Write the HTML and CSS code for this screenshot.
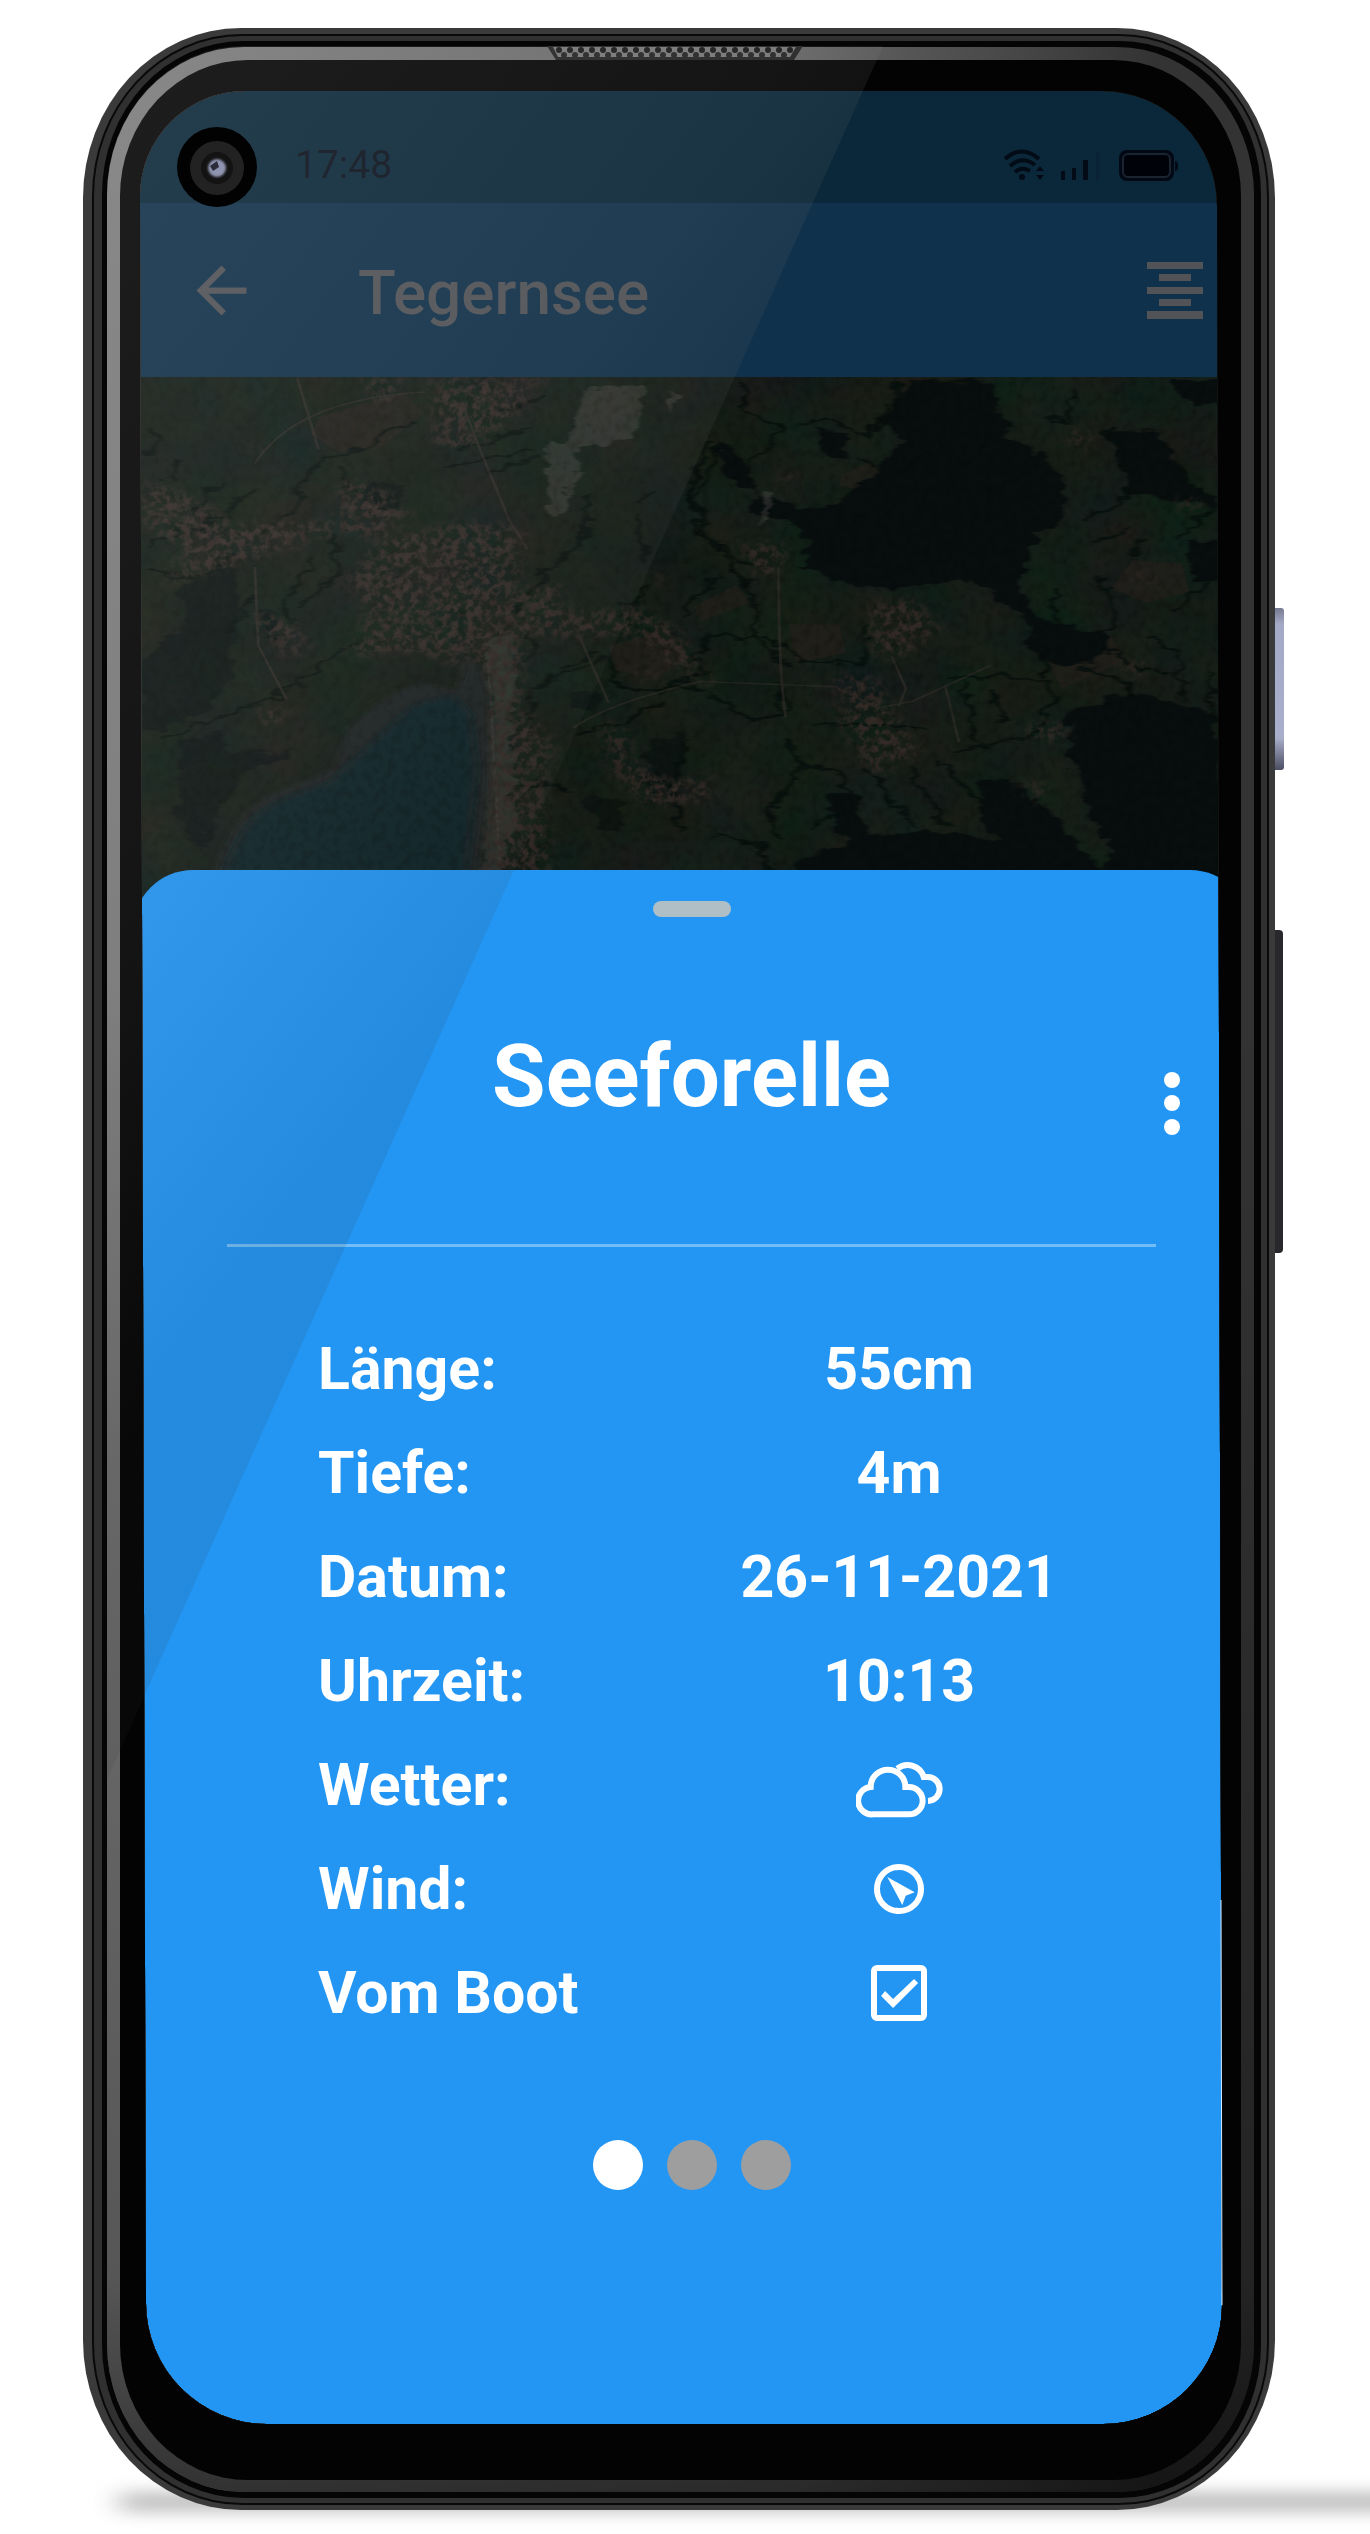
FILE: index.html
```html
<!DOCTYPE html>
<html lang="de">
<head>
<meta charset="utf-8">
<meta name="viewport" content="width=device-width, initial-scale=1">
<title>Tegernsee – Seeforelle</title>
<link rel="stylesheet" href="styles.css">
</head>
<body>
<main class="phone">
  <div class="screen">
    <div class="status">
      <span>17:48</span>
      <svg class="status-icons" viewBox="0 0 176 32" aria-hidden="true">
        <g fill="none" stroke="#030b16" stroke-width="4">
          <path d="M3 10Q20-5 37 10M8 17Q20 6 33 16M13 23Q20 17 28 22"/>
        </g>
        <circle cx="20" cy="28" r="3" fill="#030b16"/>
        <path d="M34 22l4-5 4 5zM34 26l4 5 4-5z" fill="#030b16"/>
        <path d="M59 22h4v9h-4zM70 19h4v12h-4zM81 11h5v20h-5z" fill="#030b16"/>
        <path d="M94 3h3v28h-3z" fill="#0a2137"/>
        <rect x="118" y="2" width="53" height="29" rx="7" fill="#020814" stroke="#020814" stroke-width="2"/>
        <rect x="121" y="5" width="47" height="23" rx="5" fill="#000209" stroke="#1a2431" stroke-width="2"/>
        <path d="M173 12q3 0 3 5t-3 5z" fill="#020814"/>
      </svg>
    </div>
    <header class="appbar">
      <button class="icon-button" type="button" aria-label="Zurück">
        <svg width="75" height="75" viewBox="0 0 24 24"><path fill="currentColor" d="M20 11H7.83l5.59-5.59L12 4l-8 8 8 8 1.41-1.41L7.83 13H20z"/></svg>
      </button>
      <h1 class="lake">Tegernsee</h1>
      <button class="icon-button" type="button" aria-label="Liste">
        <svg width="56" height="57" viewBox="0 0 56 57"><path fill="currentColor" d="M0 0h56v7H0zM12 12h32v7H12zM0 25h56v7H0zM12 37h32v7H12zM0 49h56v8H0z"/></svg>
      </button>
    </header>
    <svg class="map" viewBox="18 48 1578 1492" preserveAspectRatio="none" aria-hidden="true">
      <defs>
        <filter id="rough" x="-5%" y="-5%" width="110%" height="110%" color-interpolation-filters="sRGB">
          <feTurbulence type="fractalNoise" baseFrequency=".03" numOctaves="3" seed="4" result="n"/>
          <feDisplacementMap in="SourceGraphic" in2="n" scale="40" xChannelSelector="R" yChannelSelector="G" result="d"/>
          <feGaussianBlur in="d" stdDeviation="2"/>
        </filter>
        <filter id="houses" x="-10%" y="-10%" width="120%" height="120%" color-interpolation-filters="sRGB">
          <feGaussianBlur in="SourceGraphic" stdDeviation="12" result="b"/>
          <feTurbulence type="fractalNoise" baseFrequency=".09 .05" numOctaves="4" seed="9"/>
          <feColorMatrix values="0 0 0 0 .2  0 0 0 0 .165  0 0 0 0 .15  4 0 0 0 -1.6"/>
          <feComposite in2="b" operator="in"/>
        </filter>
        <filter id="fields" x="0" y="0" width="100%" height="100%" color-interpolation-filters="sRGB">
          <feTurbulence type="fractalNoise" baseFrequency=".011 .006" numOctaves="3" seed="21"/>
          <feColorMatrix values=".08 0 0 0 .04  0 .04 0 0 .095  0 0 .04 0 .07  0 0 0 0 1"/>
        </filter>
        <filter id="grain" x="0" y="0" width="100%" height="100%" color-interpolation-filters="sRGB">
          <feTurbulence type="fractalNoise" baseFrequency=".09 .04" numOctaves="2" seed="2"/>
          <feColorMatrix values="0 0 0 0 0  0 0 0 0 0  0 0 0 0 0  2 0 0 0 -.9"/>
        </filter>
        <filter id="soft"><feGaussianBlur stdDeviation="6"/></filter>
      </defs>
      <rect x="18" y="48" width="1578" height="1492" filter="url(#fields)"/>
      <g fill="#231f1b" opacity=".7">
        <path d="M280 160l120-70 30 60-60 90-60 20-40-50zM1020 320l40-35 45 40-30 45-60-15zM810 690l60-60 20 50-70 50zM690 800l60-30 50 60-40 60-60-20zM1310 840l90-70 20 70-90 80zM1430 560l70 10 10 80-60 30-50-40zM945 740l70 0 10 80-70 30z"/>
      </g>
      <g fill="#080e0e" filter="url(#rough)">
        <path d="M1120 60h110l20 150 70 70 20 140-40 60-30 150 10 80 120 70-30 70-70 0-30-130-60-100-160 20-80-50-10-120-70-40 10-50 90 40 60-70 60-120-40-60z"/>
        <path d="M1480 50h110v70h-90zM1400 200l70 0 40 130 40 80-130-40zM1510 510h60v110h-50zM1340 990l80-60 120 60 60 550h-240l40-150-60-260zM1050 1330l80-10 200 30 60 70v120H940l20-140zM1210 1180l50-10 70 120 30 140h-110zM995 1210l40 10 20 130-40-20zM985 190l40 20 0 80-30-20zM840 220l50 80 10 70-40-40z"/>
        <path d="M75 640l80-60 15 80-15 260-40 60-60 60H30V850l70-130zM80 1070l60-30 20 60 100-10-80 60-40 120-20 100-40-70zM340 350l60 0-10 70-40 10zM655 1220l50 10 0 90-30-20zM750 1070l40-20 10 70-30 80-30-20zM640 930l40 0-10 50-30-10zM190 690l40 40-20 50z" opacity=".55"/>
      </g>
      <g fill="none" stroke="#07100d" stroke-width="7" filter="url(#rough)" opacity=".85">
        <path d="M420 185l-40 10-30 50-50 30-40 60-10 70-30 60-20 30M45 190l5 50-15 30M90 280l-20 60M190 360l-90 130M270 560l-40 130 30 60M300 490l10 120-60 80M460 300l120-50M520 320l70-50M530 220l50-40M600 100l-60 50M830 230l-25 130 10 120 50 90 35 120-5 80 50 90M850 230l-40 170 20 100 60 80M880 60l0 70 60 60-40 70-20 70M960 180l50-20 50 60 20-100M1100 60l0 90-40 60M1040 280l60 40 50-70M660 380l0 120-60 90-40 120M760 370l-30 30M730 430l10 140M580 760l0 90M830 770l90 10 40 60 90 15 5-120M830 770l-15 110M690 830l-100 80-15 100M690 830l10 90 120 0M700 720l50-90M790 720l40-80 10-30M930 900l10 90-40 20-60-70M770 960l-120 90M800 1060l-20 130 10 120M940 1060l30 80 50 10 10 100-60 60M970 1020l90 0 80 10M1060 1150l60 160M1110 1130l60 180M1160 1120l60 130M1170 1090l60-5 70-50 20-130-70-20-80 10M1300 780l10 110M1360 860l60 40 20 120M1380 790l50 70 60 20M1390 600l20 130-30 40M1490 700l60-90M1380 520l50-60M1440 500l-10 60M1490 500l60-90M1360 450l60-60 0-120-30-90M1480 280l50 100 40 10M1320 640l0 90M1190 900l20 170M1230 920l20 100M960 1130l-40 140 10 80M560 1180l70 20M840 1330l60 30 20 80M60 1060l150-110 60-70 60-90M30 590l80 20 60-60"/>
        <path d="M470 260l100-60M40 520l40-40M100 420l50-80M150 760l40-100M310 300l20 70M1310 160l30 10 10-90M760 940l70-70M620 860l60-40M1460 770l40 80 0 110M1540 880v160"/>
      </g>
      <g fill="none" stroke="#39322e" stroke-width="4" opacity=".5">
        <path d="M190 290q60-180 240-200M485 130l25 130 40 190 25 80M190 580l5 220 40 150M640 1030q50-70 180-130l190 15 60 60 50-20 110-100M940 1000q-10-130-10-420M1090 830l20 90-10 50M1165 910l20 160M650 780l40 180M250 50l30 200M520 850l20 690"/>
      </g>
      <path d="M660 80l80-10 0 70-20 80-70 30-40 90 30-160zM600 240l50 0-20 190-20 0zM775 80l20 20-15 50zM905 360l12 10-6 100-8-10zM525 780l30 0 0 500-25 240-20-30z" fill="#5b5954" opacity=".34" filter="url(#rough)"/>
      <g fill="#fff" filter="url(#houses)">
        <path d="M440 50h160l-40 100-70 110-50-30zM340 50h60l-30 100zM30 340l60 30 70 90 110-10 60 20-80 50-100 60-90 50 30-90-60-90zM310 330l60 30 40 80-50 60-50-20zM370 500l120-50 80 20-10 180 60-30 20 140-70 10-20 90 20 80-50-60-100-60-100 10 30-120-30-100zM560 650l80 60 90-20 60 70 40 140-60-50-40-80-130 10zM180 700l60 30 30 80-40 20zM510 780l60 20 0 180 50 100-20 70 10 380h-90l-20-300zM680 1000l40 40 0 80 60 60 50-20 10 70-100 20-50-110zM870 520l70-10-10 90-30 10zM1060 680l60-10 40 80-60 90-40-20zM1010 880l60 10 20 90 40 120-70 70-40-160zM1430 580l30 20-20 50zM1340 190l30 0 0 60-30-10zM1410 850l50-10-20 60zM1290 1010l50 10-10 50-50-10zM1270 1170l40 20-20 60zM190 970l50 10-30 60zM720 860l40 10-10 40zM800 870l40 20-20 30zM1490 390l40 0-20 50zM920 310l40 10-20 30zM750 590l20 20-10 30zM185 230l20 10-10 30z"/>
      </g>
      <path d="M390 925q50-35 85 5l15-100q25 20 30 120l2 240-20 360H115q20-180 60-280 30-60 100-100 40-35 45-140z" fill="#1d2421" filter="url(#soft)"/>
      <path d="M415 965l55-25 25 50 8 150-20 400H130q20-170 60-260 25-50 105-95l50-95z" fill="#0e2225" filter="url(#soft)"/>
      <rect x="18" y="48" width="1578" height="1492" filter="url(#grain)" opacity=".25"/>
    </svg>
    <section class="sheet" aria-labelledby="fish">
      <div class="handle"></div>
      <header class="sheet-head">
        <h2 id="fish">Seeforelle</h2>
        <button class="icon-button more" type="button" aria-label="Mehr">
          <svg width="16" height="63" viewBox="0 0 16 63"><g fill="currentColor"><circle cx="8" cy="8" r="8"/><circle cx="8" cy="31" r="8"/><circle cx="8" cy="55" r="8"/></g></svg>
        </button>
      </header>
      <table class="facts">
        <tr><th scope="row">Länge:</th><td>55cm</td></tr>
        <tr><th scope="row">Tiefe:</th><td>4m</td></tr>
        <tr><th scope="row">Datum:</th><td>26-11-2021</td></tr>
        <tr><th scope="row">Uhrzeit:</th><td>10:13</td></tr>
        <tr><th scope="row">Wetter:</th><td>
          <svg class="cloud" width="87" height="66" viewBox="168 98 261 198" role="img" aria-label="Bewölkt"><g fill="none" stroke="currentColor" stroke-width="18"><path d="M219 285H327A41 41 0 0 0 327 203H316A52 52 0 0 0 212 203A41 41 0 0 0 219 285z"/><path d="M292 148A50 50 0 0 1 371 173H382A36 36 0 0 1 384 245"/></g></svg>
        </td></tr>
        <tr><th scope="row">Wind:</th><td>
          <svg width="50" height="50" viewBox="224 432 150 150" role="img" aria-label="Nordwest"><circle cx="299" cy="507" r="66" fill="none" stroke="currentColor" stroke-width="18"/><path d="M264 471L346 517 319 527 309 555z" fill="currentColor"/></svg>
        </td></tr>
        <tr><th scope="row"><label for="boat">Vom Boot</label></th><td><input class="check" id="boat" type="checkbox" checked></td></tr>
      </table>
      <nav class="pages" aria-label="Seiten">
        <button class="page current" type="button" aria-label="Seite 1"></button>
        <button class="page" type="button" aria-label="Seite 2"></button>
        <button class="page" type="button" aria-label="Seite 3"></button>
      </nav>
    </section>
  </div>
  <svg class="frame" viewBox="0 0 1370 2534" preserveAspectRatio="none" aria-hidden="true">
    <defs>
      <clipPath id="hole"><path clip-rule="evenodd" d="M0 0H1370V2534H0zM140 196A105 105 0 0 1 245 91H1102A115 115 0 0 1 1217 206L1222 2305A119 119 0 0 1 1103 2424H267A121 121 0 0 1 146 2303z"/></clipPath>
      <clipPath id="body"><rect x="107" y="46" width="1147" height="2447" rx="137" ry="148"/></clipPath>
      <linearGradient id="rim" x1="83" x2="1275" y1="0" y2="0" gradientUnits="userSpaceOnUse"><stop stop-color="#7c7c7c"/><stop offset=".6" stop-color="#656565"/><stop offset=".9" stop-color="#333"/></linearGradient>
      <linearGradient id="dim" x1="0" x2="0" y1="1000" y2="2500" gradientUnits="userSpaceOnUse"><stop stop-color="#000" stop-opacity="0"/><stop offset=".85" stop-color="#000" stop-opacity=".3"/><stop offset="1" stop-color="#000" stop-opacity=".6"/></linearGradient>
      <linearGradient id="shine" x1="142" y1="91" x2="790" y2="591" gradientUnits="userSpaceOnUse"><stop stop-color="#f0f0f0"/><stop offset=".62" stop-color="#a0a0a0"/><stop offset="1" stop-color="#323232"/></linearGradient>
      <linearGradient id="key" x1="0" y1="0" x2="0" y2="1"><stop stop-color="#777b90"/><stop offset=".1" stop-color="#a4a9c6"/><stop offset=".8" stop-color="#a9aeca"/><stop offset="1" stop-color="#4c4f63"/></linearGradient>
      <pattern id="mesh" x="556" y="46" width="11" height="12" patternUnits="userSpaceOnUse"><rect width="11" height="12" fill="#777"/><circle cx="3" cy="4" r="3" fill="#161616"/><circle cx="8" cy="9" r="3" fill="#222"/></pattern>
      <filter id="haze" x="-10%" y="-200%" width="120%" height="500%"><feGaussianBlur stdDeviation="14 8"/></filter>
      <filter id="edge" x="-20%" y="-20%" width="140%" height="140%"><feGaussianBlur stdDeviation="1"/></filter>
    </defs>
    <path d="M120 2492H1420V2512H120z" fill="#c0c0c0" filter="url(#haze)"/>
    <rect x="1268" y="608" width="16" height="162" rx="3" fill="url(#key)"/>
    <rect x="1268" y="930" width="15" height="323" rx="4" fill="#28282c"/>
    <g clip-path="url(#hole)">
      <rect x="83" y="28" width="1192" height="2482" rx="158" ry="170" fill="#3a3a3a"/>
      <rect x="92" y="34" width="1177" height="2471" rx="150" ry="162" fill="#090909"/>
      <rect x="94" y="36" width="1173" height="2467" rx="148" ry="160" fill="#303030"/>
      <rect x="102" y="41" width="1159" height="2457" rx="141" ry="153" fill="#050505"/>
      <rect x="107" y="47" width="1147" height="2445" rx="137" ry="148" fill="url(#rim)"/>
      <rect x="107" y="47" width="1147" height="2445" rx="137" ry="148" fill="url(#dim)"/>
      <rect x="120" y="60" width="1121" height="2420" rx="128" ry="136" fill="#030303"/>
      <path d="M547 46H803L794 60H556z" fill="#222"/>
      <path d="M553 47H796L790 57H558z" fill="url(#mesh)"/>
    </g>
    <path d="M1221 1900L1222 2305" stroke="#d8ecff" stroke-width="1"/>
    <path d="M107 46H883L146 1692L107 1780z" fill="url(#shine)" fill-opacity=".11" clip-path="url(#body)"/>
    <circle cx="217" cy="167" r="40" fill="#020202"/>
    <circle cx="217" cy="168" r="27" fill="#222"/>
    <circle cx="217" cy="168" r="16" fill="#131313"/>
    <circle cx="217" cy="168" r="9" fill="#8f94b0" filter="url(#edge)"/>
    <path d="M210 166l7-5 2 6-6 4z" fill="#2b2c3a"/>
  </svg>
</main>
</body>
</html>
```
FILE: styles.css
```css
* {
  box-sizing: border-box;
}

body {
  margin: 0;
  background: #fff;
  color: #fff;
  font-family: Roboto, "Liberation Sans", sans-serif;
}

h1,
h2 {
  margin: 0;
}

svg {
  display: block;
}

.phone {
  position: relative;
  padding: 91px 120px 94px 133px;
}

/* Phone body, reflections and camera lie over the screen */
.frame {
  position: absolute;
  inset: 0;
  width: 100%;
  height: 100%;
  pointer-events: none;
}

.screen {
  display: flex;
  flex-direction: column;
  overflow: hidden;
  border-radius: 90px;
  background: #0b120f;
}

.status {
  display: flex;
  justify-content: space-between;
  align-items: center;
  height: 112px;
  padding: 36px 72px 0 162px;
  background: #0b283a;
  color: #0b111c;
  font-size: 39px;
}

.status-icons {
  width: 176px;
  height: 32px;
}

.appbar {
  display: flex;
  align-items: center;
  height: 174px;
  padding: 0 47px 0 51px;
  background: #10314b;
  color: #515356;
}

.lake {
  flex: 1;
  padding: 4px 0 0 99px;
  font-size: 62px;
  font-weight: 500;
}

.icon-button {
  padding: 0;
  border: 0;
  background: none;
  color: inherit;
}

.map {
  width: 100%;
  height: 533px;
}

.sheet {
  display: flex;
  flex-direction: column;
  margin-top: -40px;
  padding: 31px 0 250px;
  border-radius: 60px 60px 0 0;
  background: #2396f4;
}

.handle {
  align-self: center;
  width: 78px;
  height: 16px;
  border-radius: 8px;
  background: #b0bec5;
}

.sheet-head {
  display: grid;
  grid-template-columns: 1fr auto 1fr;
  align-items: start;
  height: 221px;
  margin: 109px 94px 0;
  border-bottom: 3px solid #72bdf8;
}

.sheet-head h2 {
  grid-column: 2;
  font-size: 87px;
  font-weight: 700;
  line-height: 100px;
}

.more {
  justify-self: end;
  margin: 46px -24px 0 0;
}

.facts {
  margin: 70px 187px 0 185px;
  border-collapse: collapse;
  table-layout: fixed;
  font-size: 59px;
  font-weight: 700;
  line-height: 104px;
}

.facts th,
.facts td {
  height: 104px;
  padding: 0;
}

.facts th {
  width: 56%;
  text-align: left;
}

.facts td {
  text-align: center;
  vertical-align: middle;
}

.facts svg {
  margin: 0 auto;
}

.check {
  appearance: none;
  display: block;
  width: 56px;
  height: 56px;
  margin: 0 auto;
  border: 6px solid #fff;
  border-radius: 6px;
}

.check:checked::before {
  content: "";
  display: block;
  width: 44px;
  height: 44px;
  background: #fff;
  clip-path: polygon(8px 20px, 16px 28px, 37px 8px, 41px 12px, 16px 37px, 4px 25px);
}

.pages {
  display: flex;
  justify-content: center;
  gap: 24px;
  margin-top: 95px;
}

.page {
  width: 50px;
  height: 50px;
  padding: 0;
  border: 0;
  border-radius: 50%;
  background: #9e9e9e;
}

.page.current {
  background: #fff;
}
```
